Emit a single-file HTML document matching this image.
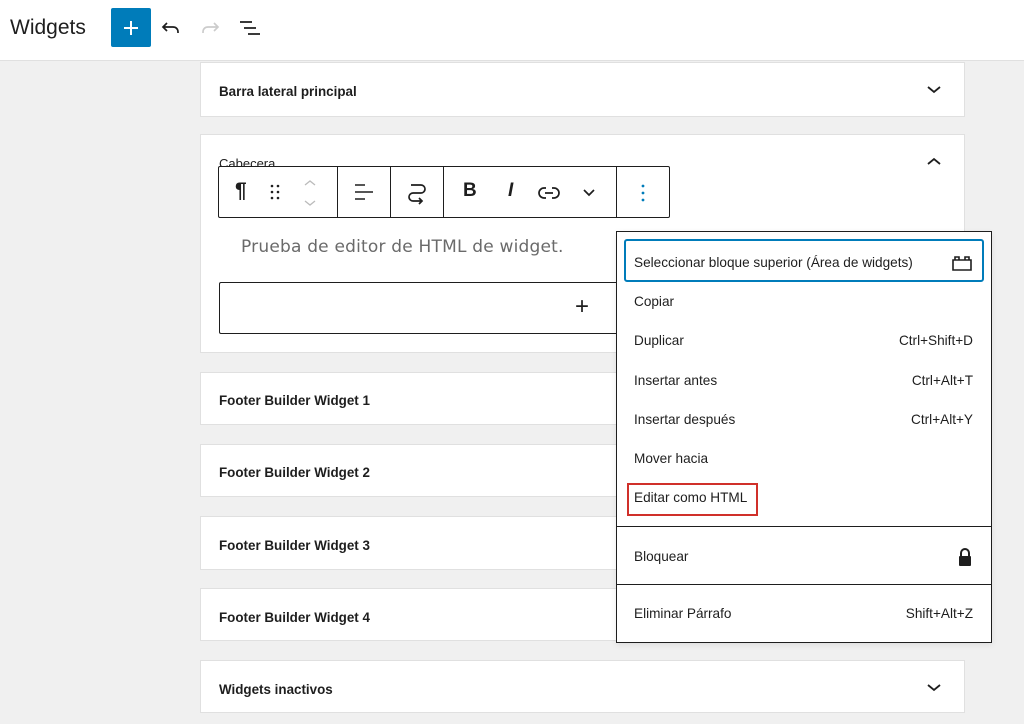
<!DOCTYPE html>
<html><head><meta charset="utf-8"><style>
*{box-sizing:border-box;margin:0;padding:0}
body{width:1024px;height:724px;overflow:hidden;background:#f0f0f0;font-family:"Liberation Sans",sans-serif;position:relative;color:#1e1e1e}
.hdr{position:absolute;left:0;top:0;width:1024px;height:61px;background:#fff;border-bottom:1px solid #e0e0e0}
.abs{position:absolute}
.panel{position:absolute;left:200px;width:765px;background:#fff;border:1px solid #e0e0e0}
.ptitle{position:absolute;left:18px;font-size:13.4px;font-weight:bold;color:#1e1e1e}
.chev{position:absolute;left:725px}
.menu{position:absolute;left:616px;top:231px;width:376px;height:412px;background:#fff;border:1px solid #1e1e1e;box-shadow:0 2px 6px rgba(0,0,0,.08)}
.mi{position:absolute;left:17px;right:18px;font-size:13.6px;color:#1e1e1e;height:20px;line-height:20px}
.mi span{position:absolute;right:0;top:0;color:#1e1e1e}
.sep{position:absolute;left:0;right:0;height:1px;background:#1e1e1e}
</style></head><body>
<div class="hdr">
 <div class="abs" style="left:10px;top:16px;font-size:21px;color:#1e1e1e">Widgets</div>
 <div class="abs" style="left:111px;top:8px;width:40px;height:39px;background:#007cba;border-radius:2px"></div>
 <svg class="abs" style="left:121px;top:18px" width="20" height="20"><path d="M10 3v14M3 10h14" stroke="#fff" stroke-width="2"/></svg>
 <svg class="abs" style="left:160px;top:17px" width="22" height="22"><path d="M7 6L3 10l4 4M3 10h10c3 0 5 2 5 5v1" stroke="#1e1e1e" stroke-width="1.7" fill="none"/></svg>
 <svg class="abs" style="left:199px;top:17px" width="22" height="22"><path d="M15 6l4 4-4 4M19 10H9c-3 0-5 2-5 5v1" stroke="#ccc" stroke-width="1.7" fill="none"/></svg>
 <svg class="abs" style="left:238px;top:17px" width="24" height="22"><path d="M2 5h12M6 11h12M10 17h12" stroke="#1e1e1e" stroke-width="1.7"/></svg>
</div>

<div class="panel" style="top:62px;height:55px"><div class="ptitle" style="top:21px">Barra lateral principal</div>
<svg class="chev" style="top:21px" width="16" height="12"><path d="M2 3l6 5 6-5" stroke="#1e1e1e" stroke-width="1.8" fill="none"/></svg></div>

<div class="panel" style="top:134px;height:219px">
 <div class="ptitle" style="top:21px;font-weight:normal;font-size:13px">Cabecera</div>
 <svg class="chev" style="top:20px" width="16" height="12"><path d="M2 9l6-5 6 5" stroke="#1e1e1e" stroke-width="1.8" fill="none"/></svg>
 <div class="abs" style="left:40px;top:102px;color:#6a6a6a;font-family:'DejaVu Sans',sans-serif;font-size:17px;letter-spacing:.2px">Prueba de editor de HTML de widget.</div>
 <div class="abs" style="left:18px;top:147px;width:420px;height:52px;border:1px solid #1e1e1e;border-right:none;border-radius:2px 0 0 2px"></div>
 <div class="abs" style="left:374px;top:158px;font-size:24px;color:#1e1e1e">+</div>
</div>

<!-- toolbar -->
<div class="abs" style="left:218px;top:166px;width:452px;height:52px;background:#fff;border:1px solid #1e1e1e;border-radius:2px">
 <div class="abs" style="left:118px;top:0;width:1px;height:50px;background:#1e1e1e"></div>
 <div class="abs" style="left:171px;top:0;width:1px;height:50px;background:#1e1e1e"></div>
 <div class="abs" style="left:224px;top:0;width:1px;height:50px;background:#1e1e1e"></div>
 <div class="abs" style="left:397px;top:0;width:1px;height:50px;background:#1e1e1e"></div>
 <div class="abs" style="left:16px;top:12px;font-size:21px;font-weight:bold">¶</div>
 <svg class="abs" style="left:50px;top:16px" width="12" height="18"><g fill="#1e1e1e"><circle cx="3" cy="3" r="1.3"/><circle cx="9" cy="3" r="1.3"/><circle cx="3" cy="9" r="1.3"/><circle cx="9" cy="9" r="1.3"/><circle cx="3" cy="15" r="1.3"/><circle cx="9" cy="15" r="1.3"/></g></svg>
 <svg class="abs" style="left:83px;top:10px" width="16" height="32"><path d="M3 8l5-4 5 4M3 24l5 4 5-4" stroke="#bbb" stroke-width="1.3" fill="none"/></svg>
 <svg class="abs" style="left:134px;top:16px" width="22" height="20"><path d="M2 2h10M2 9h18M2 16h10" stroke="#1e1e1e" stroke-width="1.6"/></svg>
 <svg class="abs" style="left:186px;top:13px" width="24" height="26"><path d="M6 5h10a4 4 0 010 8H8a4 4 0 000 8h9M14 18l3 3-3 3" stroke="#1e1e1e" stroke-width="1.7" fill="none"/></svg>
 <div class="abs" style="left:244px;top:13px;font-size:19px;font-weight:bold">B</div>
 <div class="abs" style="left:289px;top:13px;font-size:19px;font-style:italic;font-weight:bold">I</div>
 <svg class="abs" style="left:318px;top:16px" width="24" height="20"><path d="M9 5H7a5 5 0 000 10h2M15 5h2a5 5 0 010 10h-2M8 10h8" stroke="#1e1e1e" stroke-width="1.7" fill="none"/></svg>
 <svg class="abs" style="left:362px;top:20px" width="16" height="12"><path d="M3 3l5 5 5-5" stroke="#1e1e1e" stroke-width="1.7" fill="none"/></svg>
 <svg class="abs" style="left:420px;top:15px" width="8" height="22"><g fill="#007cba"><circle cx="4" cy="4" r="1.4"/><circle cx="4" cy="11" r="1.4"/><circle cx="4" cy="18" r="1.4"/></g></svg>
</div>

<div class="panel" style="top:372px;height:53px"><div class="ptitle" style="top:20px">Footer Builder Widget 1</div></div>
<div class="panel" style="top:444px;height:53px"><div class="ptitle" style="top:20px">Footer Builder Widget 2</div></div>
<div class="panel" style="top:516px;height:54px"><div class="ptitle" style="top:21px">Footer Builder Widget 3</div></div>
<div class="panel" style="top:588px;height:53px"><div class="ptitle" style="top:21px">Footer Builder Widget 4</div></div>
<div class="panel" style="top:660px;height:53px"><div class="ptitle" style="top:21px">Widgets inactivos</div>
<svg class="chev" style="top:21px" width="16" height="12"><path d="M2 3l6 5 6-5" stroke="#1e1e1e" stroke-width="1.8" fill="none"/></svg></div>

<div class="menu">
 <div class="abs" style="left:7px;top:7px;width:360px;height:43px;border:2px solid #007cba;border-radius:3px"></div>
 <div class="mi" style="top:21px">Seleccionar bloque superior (Área de widgets)<span><svg width="22" height="16" style="margin-top:2px"><path d="M2 5h18v10H2zM4 5V2h4v3M14 5V2h4v3" stroke="#1e1e1e" stroke-width="1.6" fill="none"/></svg></span></div>
 <div class="mi" style="top:60px">Copiar</div>
 <div class="mi" style="top:99px">Duplicar<span>Ctrl+Shift+D</span></div>
 <div class="mi" style="top:139px">Insertar antes<span>Ctrl+Alt+T</span></div>
 <div class="mi" style="top:178px">Insertar después<span>Ctrl+Alt+Y</span></div>
 <div class="mi" style="top:217px">Mover hacia</div>
 <div class="abs" style="left:10px;top:251px;width:131px;height:33px;border:2px solid #d0302a"></div>
 <div class="mi" style="top:256px">Editar como HTML</div>
 <div class="sep" style="top:294px"></div>
 <div class="mi" style="top:315px">Bloquear<span><svg width="16" height="20" style="margin-top:0"><path d="M4 9V6a4 4 0 018 0v3" stroke="#1e1e1e" stroke-width="2" fill="none"/><rect x="2" y="9" width="12" height="10" rx="1" fill="#1e1e1e"/></svg></span></div>
 <div class="sep" style="top:352px"></div>
 <div class="mi" style="top:372px">Eliminar Párrafo<span>Shift+Alt+Z</span></div>
</div>
</body></html>
